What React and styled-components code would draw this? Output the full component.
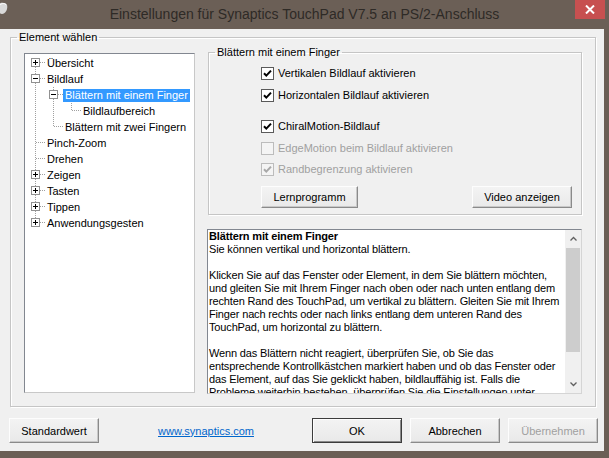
import React from 'react';
import styled, { createGlobalStyle } from 'styled-components';

const GlobalStyle = createGlobalStyle`
  html, body {
    margin: 0;
    padding: 0;
    background: #6b5f56;
  }
  body {
    font-family: "Liberation Sans", Arial, sans-serif;
    font-size: 11px;
    color: #000;
  }
`;

const Window = styled.div`
  width: 609px;
  height: 458px;
  background: #6b5f56;
  display: flex;
  flex-direction: column;
  overflow: hidden;
`;

const TitleBar = styled.div`
  height: 29px;
  flex: none;
  display: grid;
  grid-template-columns: 1fr auto 1fr;
  align-items: start;
`;

const AppIcon = styled.svg`
  margin-top: 2px;
`;

const Title = styled.div`
  font-family: "Liberation Sans", Arial, sans-serif;
  font-size: 14px;
  line-height: 28px;
  color: #2e2a26;
  white-space: nowrap;
`;

const CloseButton = styled.div`
  justify-self: end;
  margin-right: 4px;
  width: 30px;
  height: 19px;
  background: #c75050;
  display: flex;
  align-items: center;
  justify-content: center;
`;

const Client = styled.div`
  flex: 1;
  margin: 0 5px 7px 0;
  background: #f0f0f0;
  display: flex;
  flex-direction: column;
  padding: 2px 6px 8px 9px;
  min-height: 0;
`;

const Group = styled.fieldset`
  margin: 0;
  padding: 0;
  min-width: 0;
  border: 1px solid #c5c5c5;
  box-shadow: inset 1px 1px 0 #fff, 1px 1px 0 #fff;
  display: flex;
  flex-direction: column;
`;

const OuterGroup = styled(Group)`
  flex: 1;
  margin: 0 2px 0 1px;
  min-height: 0;
`;

const InnerGroup = styled(Group)`
  flex: none;
  margin: 2px 0 0 1px;
`;

const Legend = styled.legend`
  margin-left: 6px;
  padding: 0 2px;
  line-height: 13px;
  font-size: 11px;
`;

const GroupBody = styled.div`
  flex: 1;
  display: flex;
  gap: 12px;
  padding: 0 13px 12px 13px;
  min-height: 0;
`;

/* ---------- tree ---------- */

const Tree = styled.div`
  width: 171px;
  flex: none;
  margin: 9px 0 1px 0;
  background: #fff;
  border: 1px solid;
  border-color: #828790 #c8c8c8 #c8c8c8 #828790;
  box-sizing: border-box;
  padding: 1px 0 0 2px;
`;

const TreeRow = styled.div`
  height: 16px;
  display: flex;
  align-items: center;
`;

const TreeLabel = styled.span`
  padding: 0 2px;
  line-height: 13px;
  white-space: nowrap;
  background: ${p => (p.$selected ? '#3399ff' : 'transparent')};
  color: ${p => (p.$selected ? '#fff' : '#000')};
`;

const LINE = '#a0a0a0';

function Connector({ kind, first, hasNext, hasChildren, expanded }) {
  // 'pass' = column of an ancestor, 'own' = the row's own branch
  if (kind === 'pass') {
    return (
      <svg width="18" height="16" style={{ flex: 'none', display: 'block' }}>
        {hasNext && (
          <line x1="8.5" y1="0" x2="8.5" y2="16" stroke={LINE} strokeDasharray="1 1" />
        )}
      </svg>
    );
  }
  return (
    <svg width="18" height="16" style={{ flex: 'none', display: 'block' }}>
      {!first && <line x1="8.5" y1="0" x2="8.5" y2="8" stroke={LINE} strokeDasharray="1 1" />}
      {hasNext && <line x1="8.5" y1="8" x2="8.5" y2="16" stroke={LINE} strokeDasharray="1 1" />}
      <line x1="9" y1="7.5" x2="18" y2="7.5" stroke={LINE} strokeDasharray="1 1" />
      {hasChildren && (
        <g>
          <rect x="4.5" y="3.5" width="8" height="8" fill="#fff" stroke="#919191" />
          <line x1="6" y1="7.5" x2="11" y2="7.5" stroke="#000" />
          {!expanded && <line x1="8.5" y1="5" x2="8.5" y2="10" stroke="#000" />}
        </g>
      )}
    </svg>
  );
}

const treeData = [
  { label: 'Übersicht', children: [{ label: 'x' }] },
  {
    label: 'Bildlauf',
    expanded: true,
    children: [
      {
        label: 'Blättern mit einem Finger',
        expanded: true,
        selected: true,
        children: [{ label: 'Bildlaufbereich' }],
      },
      { label: 'Blättern mit zwei Fingern' },
    ],
  },
  { label: 'Pinch-Zoom' },
  { label: 'Drehen' },
  { label: 'Zeigen', children: [{ label: 'x' }] },
  { label: 'Tasten', children: [{ label: 'x' }] },
  { label: 'Tippen', children: [{ label: 'x' }] },
  { label: 'Anwendungsgesten', children: [{ label: 'x' }] },
];

function flatten(nodes, ancestors = [], out = []) {
  nodes.forEach((n, i) => {
    const hasNext = i < nodes.length - 1;
    out.push({
      ...n,
      ancestors,
      hasNext,
      first: ancestors.length === 0 && i === 0,
      hasChildren: !!n.children,
    });
    if (n.children && n.expanded) flatten(n.children, [...ancestors, hasNext], out);
  });
  return out;
}

const rows = flatten(treeData);

/* ---------- right side ---------- */

const RightColumn = styled.div`
  flex: 1;
  display: flex;
  flex-direction: column;
  min-width: 0;
`;

const InnerBody = styled.div`
  padding: 6px 9px 6px 52px;
  display: flex;
  flex-direction: column;
`;

const CheckRow = styled.div`
  height: 16px;
  margin-top: ${p => p.$gap || 0}px;
  display: flex;
  align-items: center;
  gap: 4px;
  color: ${p => (p.$disabled ? '#a0a0a0' : '#000')};
  white-space: nowrap;
`;

function CheckBox({ checked, disabled }) {
  const frame = disabled ? '#bcbcbc' : '#5a5a5a';
  const fill = disabled ? '#f4f4f4' : '#fff';
  const mark = disabled ? '#a8a8a8' : '#000';
  return (
    <svg width="13" height="13" style={{ flex: 'none', display: 'block' }}>
      <rect x="0.5" y="0.5" width="12" height="12" fill={fill} stroke={frame} />
      {checked && (
        <path d="M3 6.2 L5.3 8.6 L10 3.6" fill="none" stroke={mark} strokeWidth="2" />
      )}
    </svg>
  );
}

const ButtonRow = styled.div`
  margin-top: 9px;
  display: flex;
  justify-content: space-between;
`;

const Button = styled.button`
  width: ${p => p.$w || 90}px;
  height: ${p => p.$h || 25}px;
  padding: 0;
  font-family: "Liberation Sans", Arial, sans-serif;
  font-size: 11px;
  background: linear-gradient(#f3f3f3, #e9e9e9);
  color: ${p => (p.disabled ? '#a0a0a0' : '#000')};
  border: 1px solid;
  border-color: ${p =>
    p.$default ? '#3c3c3c' : '#fdfdfd #8a8a8a #8a8a8a #fdfdfd'};
  box-shadow: ${p =>
    p.$default
      ? 'inset 1px 1px 0 #fdfdfd, inset -1px -1px 0 #8a8a8a'
      : 'inset -1px -1px 0 #c8c8c8'};
  border-radius: 0;
`;

const TextBox = styled.div`
  flex: 1;
  margin-top: 14px;
  display: flex;
  background: #fff;
  border: 1px solid;
  border-color: #828790 #d5d5d5 #d5d5d5 #828790;
  min-height: 0;
`;

const TextArea = styled.div`
  flex: 1;
  overflow: hidden;
  padding-left: 1px;
  line-height: 13px;
  letter-spacing: -0.15px;
  white-space: nowrap;
`;

const Heading = styled.div`
  font-weight: bold;
`;

const Line = styled.div`
  height: 13px;
`;

const ScrollBar = styled.div`
  width: 16px;
  flex: none;
  background: #f0f0f0;
  display: flex;
  flex-direction: column;
`;

const ScrollArrow = styled.div`
  height: 17px;
  display: flex;
  align-items: center;
  justify-content: center;
`;

const ScrollTrack = styled.div`
  flex: 1;
  padding: 1px 1px 0 1px;
`;

const Thumb = styled.div`
  height: 104px;
  background: #cdcdcd;
`;

const Footer = styled.div`
  margin-top: 11px;
  display: flex;
  align-items: center;
`;

const Link = styled.a`
  margin-left: 59px;
  color: #0066cc;
  text-decoration: underline;
  white-space: nowrap;
`;

const FooterRight = styled.div`
  margin-left: auto;
  display: flex;
  gap: 8px;
`;

const helpLines = [
  'Sie können vertikal und horizontal blättern.',
  '',
  'Klicken Sie auf das Fenster oder Element, in dem Sie blättern möchten,',
  'und gleiten Sie mit Ihrem Finger nach oben oder nach unten entlang dem',
  'rechten Rand des TouchPad, um vertikal zu blättern. Gleiten Sie mit Ihrem',
  'Finger nach rechts oder nach links entlang dem unteren Rand des',
  'TouchPad, um horizontal zu blättern.',
  '',
  'Wenn das Blättern nicht reagiert, überprüfen Sie, ob Sie das',
  'entsprechende Kontrollkästchen markiert haben und ob das Fenster oder',
  'das Element, auf das Sie geklickt haben, bildlauffähig ist. Falls die',
  'Probleme weiterhin bestehen, überprüfen Sie die Einstellungen unter',
];

export default function App() {
  return (
    <>
      <GlobalStyle />
      <Window>
        <TitleBar>
          <AppIcon width="10" height="14" viewBox="0 0 10 14">
            <path d="M-2 4 C-2 0 6 0 7 3 C8 6 6 12 2 12 C-1 12 -2 8 -2 4 Z" fill="#d9d9d9" />
            <path d="M0 3 C2 1 5 1 6 3" stroke="#fff" fill="none" />
          </AppIcon>
          <Title>Einstellungen für Synaptics TouchPad V7.5 an PS/2-Anschluss</Title>
          <CloseButton>
            <svg width="10" height="9" viewBox="0 0 10 9">
              <path d="M1 0.5 L9 8.5 M9 0.5 L1 8.5" stroke="#fff" strokeWidth="2" />
            </svg>
          </CloseButton>
        </TitleBar>

        <Client>
          <OuterGroup>
            <Legend>Element wählen</Legend>
            <GroupBody>
              <Tree>
                {rows.map((r, i) => (
                  <TreeRow key={i}>
                    {r.ancestors.map((a, j) => (
                      <Connector key={j} kind="pass" hasNext={a} />
                    ))}
                    <Connector
                      kind="own"
                      first={r.first}
                      hasNext={r.hasNext}
                      hasChildren={r.hasChildren}
                      expanded={r.expanded}
                    />
                    <TreeLabel $selected={r.selected}>{r.label}</TreeLabel>
                  </TreeRow>
                ))}
              </Tree>

              <RightColumn>
                <InnerGroup>
                  <Legend>Blättern mit einem Finger</Legend>
                  <InnerBody>
                    <CheckRow>
                      <CheckBox checked />
                      Vertikalen Bildlauf aktivieren
                    </CheckRow>
                    <CheckRow $gap={6}>
                      <CheckBox checked />
                      Horizontalen Bildlauf aktivieren
                    </CheckRow>
                    <CheckRow $gap={15}>
                      <CheckBox checked />
                      ChiralMotion-Bildlauf
                    </CheckRow>
                    <CheckRow $gap={6} $disabled>
                      <CheckBox disabled />
                      EdgeMotion beim Bildlauf aktivieren
                    </CheckRow>
                    <CheckRow $gap={5} $disabled>
                      <CheckBox checked disabled />
                      Randbegrenzung aktivieren
                    </CheckRow>
                    <ButtonRow>
                      <Button $w={97} $h={22}>Lernprogramm</Button>
                      <Button $w={100} $h={22}>Video anzeigen</Button>
                    </ButtonRow>
                  </InnerBody>
                </InnerGroup>

                <TextBox>
                  <TextArea>
                    <Heading>Blättern mit einem Finger</Heading>
                    {helpLines.map((l, i) => (
                      <Line key={i}>{l}</Line>
                    ))}
                  </TextArea>
                  <ScrollBar>
                    <ScrollArrow>
                      <svg width="7" height="5" viewBox="0 0 7 5">
                        <path d="M0.5 4.5 L3.5 1.5 L6.5 4.5" fill="none" stroke="#606060" strokeWidth="1.3" />
                      </svg>
                    </ScrollArrow>
                    <ScrollTrack>
                      <Thumb />
                    </ScrollTrack>
                    <ScrollArrow>
                      <svg width="7" height="5" viewBox="0 0 7 5">
                        <path d="M0.5 0.5 L3.5 3.5 L6.5 0.5" fill="none" stroke="#606060" strokeWidth="1.3" />
                      </svg>
                    </ScrollArrow>
                  </ScrollBar>
                </TextBox>
              </RightColumn>
            </GroupBody>
          </OuterGroup>

          <Footer>
            <Button>Standardwert</Button>
            <Link href="#">www.synaptics.com</Link>
            <FooterRight>
              <Button $default>OK</Button>
              <Button>Abbrechen</Button>
              <Button disabled>Übernehmen</Button>
            </FooterRight>
          </Footer>
        </Client>
      </Window>
    </>
  );
}
